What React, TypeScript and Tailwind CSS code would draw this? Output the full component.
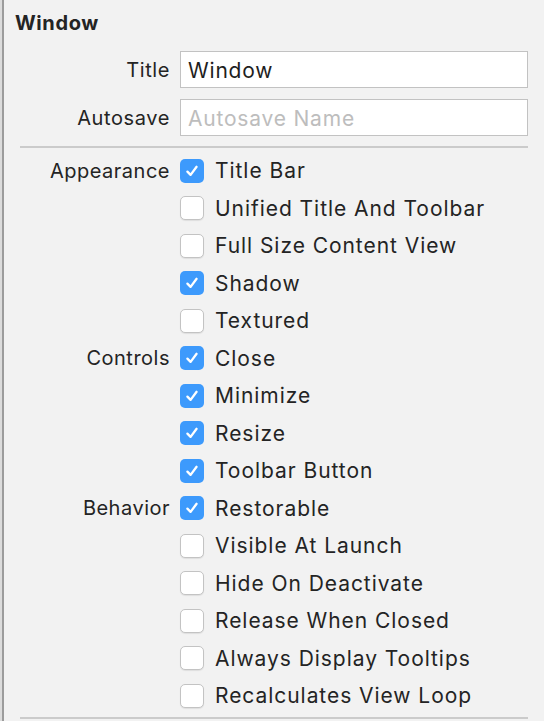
import React from "react";

const font = { fontFamily: "Inter, 'Liberation Sans', sans-serif" };

function Check({ checked }: { checked: boolean }) {
  if (checked) {
    return (
      <div className="w-[24px] h-[24px] rounded-[5px] bg-[#3d9afc] flex items-center justify-center shrink-0">
        <svg width="16" height="16" viewBox="0 0 16 16">
          <path d="M3.4 8.6 L6.6 11.9 L12.6 3.8" fill="none" stroke="#fff" strokeWidth="2.3" strokeLinecap="round" strokeLinejoin="round" />
        </svg>
      </div>
    );
  }
  return (
    <div className="w-[24px] h-[24px] rounded-[5px] bg-white border border-[#c3c3c3] shadow-[0_1px_1px_rgba(0,0,0,0.08)] shrink-0" />
  );
}

type Row = { group?: string; label: string; checked: boolean };

const rows: Row[] = [
  { group: "Appearance", label: "Title Bar", checked: true },
  { label: "Unified Title And Toolbar", checked: false },
  { label: "Full Size Content View", checked: false },
  { label: "Shadow", checked: true },
  { label: "Textured", checked: false },
  { group: "Controls", label: "Close", checked: true },
  { label: "Minimize", checked: true },
  { label: "Resize", checked: true },
  { label: "Toolbar Button", checked: true },
  { group: "Behavior", label: "Restorable", checked: true },
  { label: "Visible At Launch", checked: false },
  { label: "Hide On Deactivate", checked: false },
  { label: "Release When Closed", checked: false },
  { label: "Always Display Tooltips", checked: false },
  { label: "Recalculates View Loop", checked: false },
];

export default function App() {
  return (
    <div className="w-[544px] h-[721px] overflow-hidden bg-[#dcdcdc] pl-[2px]" style={font}>
      <div className="h-full border-l-2 border-[#9c9c9c] bg-[#f2f2f2] text-[#242424] flex flex-col">
        <div className="pl-[11px] pt-[8px] h-[51px] text-[20px] font-bold tracking-[0.6px]">Window</div>
        <div className="grid grid-cols-[166px_1fr] gap-x-[10px] pr-[16px] items-center">
          <div className="text-right text-[20px] tracking-[0.6px] h-[37px] leading-[39px]">Title</div>
          <div className="h-[37px] bg-white border border-[#c2c2c2] px-[7px] text-[21px] tracking-[0.8px] leading-[37px] text-[#1e1e1e] overflow-hidden">Window</div>
          <div className="text-right text-[20px] tracking-[0.6px] h-[37px] leading-[39px] mt-[11px]">Autosave</div>
          <div className="h-[37px] bg-white border border-[#c2c2c2] px-[7px] text-[21px] tracking-[0.8px] leading-[37px] text-[#bdbdbd] mt-[11px] overflow-hidden">Autosave Name</div>
        </div>
        <div className="ml-[16px] mr-[16px] mt-[10px] h-[2px] bg-[#cbcbcb]" />
        <div className="mt-[4px] pr-[16px]">
          {rows.map((r, i) => (
            <div key={i} className="h-[37.5px] grid grid-cols-[166px_1fr] gap-x-[10px] items-center">
              <div className="text-right text-[20px] tracking-[0.5px]">{r.group ?? ""}</div>
              <div className="flex items-center gap-[11px]">
                <Check checked={r.checked} />
                <span className="text-[21px] tracking-[0.95px]">{r.label}</span>
              </div>
            </div>
          ))}
        </div>
        <div className="ml-[16px] mr-[16px] mt-[2px] h-[2px] bg-[#cbcbcb]" />
      </div>
    </div>
  );
}
